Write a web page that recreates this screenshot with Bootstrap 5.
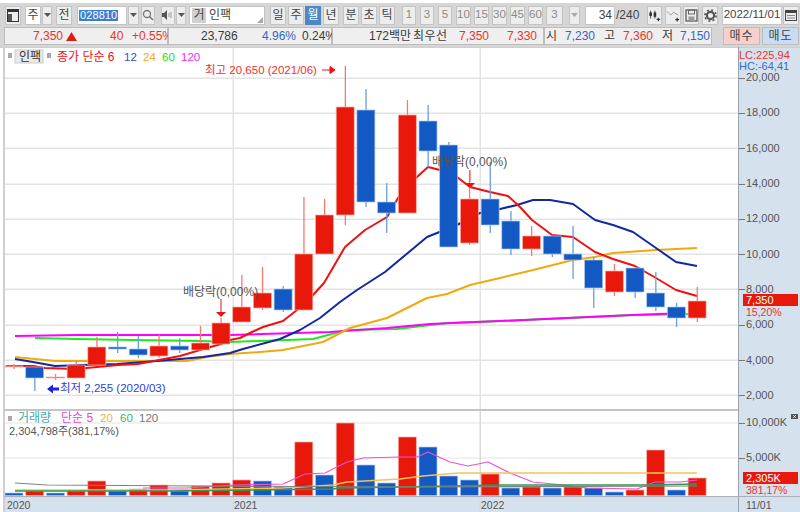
<!DOCTYPE html>
<html lang="ko">
<head>
<meta charset="utf-8">
<title>차트</title>
<link rel="stylesheet" href="https://cdn.jsdelivr.net/npm/bootstrap@5.3.0/dist/css/bootstrap.min.css">
<style>
html,body{margin:0;width:800px;height:512px;overflow:hidden;background:#fff;}
body{font-family:"Liberation Sans","Noto Sans CJK KR",sans-serif;font-size:12px;color:#333;}
.shell{width:800px;height:512px;padding-top:3px;}
.bar-top{height:24px;background:#d6d6d6;padding:2px 0 2px 5px;}
.bar-info{height:20px;background:#d6d6d6;padding:0 0 2px 4px;}
.tb{height:19px;background:#ededed;border:1px solid #c4c4c4;display:flex;align-items:center;justify-content:center;color:#444;font-size:12px;line-height:1;padding:0;flex:none;}
.tb.wht{background:#fff;}
.tb.on{background:#4f86c6;color:#fff;border-color:#4f86c6;}
.tb.mute{color:#8a8a8a;font-size:11.5px;}
.w10{width:10px}.w11{width:11px}.w14{width:14px}.w15{width:15px}.w16{width:16px}.w17{width:17px}
.ml1{margin-left:1px}.ml2{margin-left:2px}.ml3{margin-left:3px}.ml4{margin-left:4px}.ml5{margin-left:5px}.ml6{margin-left:6px}.ml7{margin-left:7px}
.code{width:50px;justify-content:flex-start;padding-left:1px;}
.code span{background:#3a7fd0;color:#fff;font-size:11px;padding:0 1px;letter-spacing:.1px;}
.combo{width:76px;justify-content:flex-start;position:relative;padding-left:2px;gap:3px;}
.combo b{font-weight:400;background:#d0d0d0;width:14px;height:15px;display:flex;align-items:center;justify-content:center;}
.combo i{position:absolute;right:1px;bottom:1px;border-left:6px solid transparent;border-bottom:6px solid #aaa;}
.num{width:30px;justify-content:flex-end;padding-right:2px;}
.ratio{width:26px;font-size:12px;color:#444;}
.dateb{width:60px;font-size:11.5px;}
.cell{position:relative;height:18px;background:#efefef;border:1px solid #bdbdbd;font-size:12px;line-height:16px;white-space:nowrap;flex:none;}
.c1{width:164px}.c2{width:164px}.c3{width:212px}.c4{width:168px}
.rd{color:#e8352c}.bl{color:#3566c4}.dk{color:#3a3a3a}
.buy,.sell{height:18px;width:37px;border:1px solid #bdbdbd;display:flex;align-items:center;justify-content:center;font-size:12px;letter-spacing:1px;color:#444;flex:none;}
.buy{background:#f6d0cb;margin-left:11px}.sell{background:#c8ddf3;margin-left:2px;}
.tx{position:absolute;}
.plot{display:block;width:800px;height:465px;}
.plot text{font-family:"Liberation Sans","Noto Sans CJK KR",sans-serif;font-size:12px;}
.plot .sm{font-size:11px;}
.plot .md{font-size:11.5px;}
.plot .xs{font-size:10.5px;}
.plot .ax text{fill:#555;font-size:11px;}
.plot .ax .xs{font-size:10.5px;}
.a1{left:28px}.a2{left:105px}.a3{left:127px}
.b1{left:32px}.b2{left:93px}.b3{left:133px}
.d1{left:36px}.d2{left:80px;letter-spacing:.5px}.d3{left:126px}.d4{left:174px}
.e1{left:1px}.e2{left:20px}.e3{left:59px}.e4{left:78px}.e5{left:117px}.e6{left:135px}
</style>
</head>
<body>
<div class="shell">
  <div class="d-flex align-items-center bar-top">
    <div class="tb w16"><svg width="12" height="13" viewBox="0 0 12 13"><rect x=".5" y=".5" width="11" height="12" fill="none" stroke="#333"/><rect x="1" y="1" width="10" height="2" fill="#333"/><rect x="1" y="5" width="4" height="7" fill="#555"/></svg></div>
    <div class="tb wht w16 ml4">주</div>
    <div class="tb w10 ml1"><svg width="7" height="4"><path d="M0 0h7L3.500 4z" fill="#555"/></svg></div>
    <div class="tb w16 ml4">전</div>
    <div class="tb wht code ml5"><span>028810</span></div>
    <div class="tb w11 ml1"><svg width="7" height="4"><path d="M0 0h7L3.500 4z" fill="#555"/></svg></div>
    <div class="tb w14 ml2"><svg width="12" height="12" viewBox="0 0 12 12"><circle cx="5" cy="5" r="3.500" fill="none" stroke="#777" stroke-width="1.300"/><path d="M7.500 7.500L11 11" stroke="#777" stroke-width="1.600"/></svg></div>
    <div class="tb w14 ml6"><svg width="12" height="12" viewBox="0 0 12 12"><path d="M0 4h2l3-3v10L2 8H0z" fill="#555"/><path d="M7 4v4M9 3v6" stroke="#999"/></svg></div>
    <div class="tb w10 ml1"><svg width="7" height="4"><path d="M0 0h7L3.500 4z" fill="#555"/></svg></div>
    <div class="tb wht combo ml3"><b>거</b><span>인팩</span><i></i></div>
    <div class="tb w16 ml5">일</div>
    <div class="tb w16 ml2">주</div>
    <div class="tb w16 on ml1">월</div>
    <div class="tb w16 ml2">년</div>
    <div class="tb w16 ml4">분</div>
    <div class="tb w16 ml2">초</div>
    <div class="tb w16 ml2">틱</div>
    <div class="tb mute w14 ml7">1</div>
    <div class="tb mute w14 ml4">3</div>
    <div class="tb mute w14 ml4">5</div>
    <div class="tb mute w15 ml4">10</div>
    <div class="tb mute w15 ml3">15</div>
    <div class="tb mute w15 ml3">30</div>
    <div class="tb mute w15 ml3">45</div>
    <div class="tb mute w15 ml3">60</div>
    <div class="tb mute w17 ml3">3</div>
    <div class="tb w11 ml6"><svg width="7" height="4"><path d="M0 0h7L3.500 4z" fill="#aaa"/></svg></div>
    <div class="tb wht num ml5">34</div>
    <div class="ratio ml1">/240</div>
    <div class="tb w15 ml5"><svg width="15" height="15" viewBox="0 0 15 15"><path d="M3 2v9M8 2v9" stroke="#333"/><rect x="1.500" y="4" width="3" height="4" fill="#333"/><rect x="6.500" y="4" width="3" height="5" fill="#333"/><path d="M12 10v4M10 12h4" stroke="#333" stroke-width="1.300"/></svg></div>
    <div class="tb w16 ml3"><svg width="15" height="15" viewBox="0 0 15 15"><path d="M1 3l4 4 3-3 5 3" fill="none" stroke="#999"/><path d="M12 10v4M10 12h4" stroke="#333" stroke-width="1.300"/></svg></div>
    <div class="tb w16 ml2"><svg width="13" height="13" viewBox="0 0 13 13"><rect x="1" y="1" width="11" height="11" fill="none" stroke="#666" stroke-width="1.400"/><rect x="3.500" y="1" width="6" height="4" fill="none" stroke="#666"/><rect x="3.500" y="7.500" width="6" height="4" fill="#999"/></svg></div>
    <div class="tb w16 ml3"><svg width="13" height="13" viewBox="0 0 13 13"><circle cx="6.500" cy="6.500" r="3.600" fill="none" stroke="#555" stroke-width="2.200"/><circle cx="6.500" cy="6.500" r="5.600" fill="none" stroke="#555" stroke-width="1.600" stroke-dasharray="2 2.400"/></svg></div>
    <div class="tb wht dateb ml4">2022/11/01</div>
    <div class="tb w16 ml1"><svg width="12" height="11" viewBox="0 0 12 11"><rect x=".5" y=".5" width="11" height="10" fill="none" stroke="#444"/><rect x="1" y="1" width="10" height="2" fill="#444"/><path d="M2 5.500h8M2 8h8" stroke="#888"/></svg></div>
  </div>
  <div class="d-flex bar-info">
    <div class="cell c1"><span class="tx a1 rd">7,350 <svg width="11" height="9" viewBox="0 0 11 9"><path d="M0 9L5.500 0 11 9z" fill="#e01e10"/></svg></span><span class="tx a2 rd">40</span><span class="tx a3 rd">+0.55%</span></div>
    <div class="cell c2"><span class="tx b1 dk">23,786</span><span class="tx b2 bl">4.96%</span><span class="tx b3 dk">0.24%</span></div>
    <div class="cell c3"><span class="tx d1 dk">172백만</span><span class="tx d2 dk">최우선</span><span class="tx d3 rd">7,350</span><span class="tx d4 rd">7,330</span></div>
    <div class="cell c4"><span class="tx e1 dk">시</span><span class="tx e2 bl">7,230</span><span class="tx e3 dk">고</span><span class="tx e4 rd">7,360</span><span class="tx e5 dk">저</span><span class="tx e6 bl">7,150</span></div>
    <div class="buy">매수</div>
    <div class="sell">매도</div>
  </div>
  <svg class="plot" viewBox="0 47 800 465" xmlns="http://www.w3.org/2000/svg">
    <rect x="0" y="47" width="800" height="465" fill="#fff"/>
    <rect x="738" y="47" width="62" height="465" fill="#d6e1ee"/>
    <rect x="4" y="497" width="734" height="15" fill="#d6e1ee"/>
    <rect x="3" y="47" width="2" height="465" fill="#cfcfcf"/>
    <rect x="0" y="47" width="800" height="1" fill="#cfcfcf"/>
    <g id="grid"></g>
    <g id="lines" fill="none" stroke-linejoin="round"></g>
    <g id="candles"></g>
    <g id="vols"></g>
    <g id="vlines" fill="none" stroke-linejoin="round"></g>
    <rect x="4" y="409" width="734" height="2" fill="#c4c4c4"/>
    <rect x="738" y="47" width="1" height="465" fill="#9aa3ad"/>
    <rect x="4" y="496" width="796" height="1" fill="#a9b0b8"/>
    <g id="ticks" stroke="#777"></g>
    <rect x="8" y="53" width="4" height="5" fill="#aaa"/>
    <rect x="15" y="50" width="28" height="13" fill="#e9e9e9" stroke="#ccc"/>
    <text x="19" y="61" fill="#333">인팩</text>
    <rect x="47" y="53" width="4" height="5" fill="#aaa"/>
    <text x="57" y="61" fill="#f01010">종가 단순 6</text>
    <text class="md" x="124" y="61" fill="#2f4fd0">12</text>
    <text class="md" x="143" y="61" fill="#f5a623">24</text>
    <text class="md" x="162" y="61" fill="#22dd22">60</text>
    <text class="md" x="181" y="61" fill="#f030f0">120</text>
    <text class="md" x="205" y="74" fill="#f03030">최고 20,650 (2021/06)</text>
    <path d="M322 70h9M330 66.500l5 3.500-5 3.500z" stroke="#f01010" fill="#f01010"/>
    <text x="183" y="296" fill="#555">배당락(0,00%)</text>
    <text x="432" y="166" fill="#555">배당락(0,00%)</text>
    <path d="M221 299v13" stroke="#f01010"/><path d="M216 312h10l-5 5z" fill="#f01010"/>
    <path d="M470 170v12" stroke="#f55"/><path d="M465 183h10l-5 5z" fill="#f01010"/>
    <path d="M47 389l6-4.500v3h6v3h-6v3z" fill="#2020e0"/>
    <text class="md" x="60" y="392" fill="#2b3fd8">최저 2,255 (2020/03)</text>
    <rect x="8" y="416" width="4" height="5" fill="#aaa"/>
    <text x="18" y="422" fill="#3fa9a9">거래량</text>
    <text x="61" y="422" fill="#f040e0">단순 5</text>
    <text class="md" x="100" y="422" fill="#f5b042">20</text>
    <text class="md" x="120" y="422" fill="#35b56a">60</text>
    <text class="md" x="139" y="422" fill="#777">120</text>
    <text class="sm" x="9" y="435" fill="#555">2,304,798주(381,17%)</text>
    <text class="sm" x="739" y="59" fill="#e8352c">LC:225,94</text>
    <text class="sm" x="739" y="70" fill="#2f6fd0">HC:-64,41</text>
    <g class="ax">
      <text x="746" y="81">20,000</text><text x="746" y="116">18,000</text><text x="746" y="152">16,000</text><text x="746" y="187">14,000</text><text x="746" y="222">12,000</text><text x="746" y="258">10,000</text><text x="746" y="293">8,000</text><text x="746" y="328">6,000</text><text x="746" y="364">4,000</text><text x="746" y="399">2,000</text>
      <text x="746" y="426">10,000K</text><text x="746" y="461">5,000K</text>
      <text class="xs" x="7" y="509">2020</text><text class="xs" x="234" y="509">2021</text><text class="xs" x="481" y="509">2022</text><text class="xs" x="746" y="509">11/01</text>
    </g>
    <rect x="743" y="294" width="55" height="12" fill="#e8190a"/>
    <text class="sm" x="746" y="304" fill="#fff">7,350</text>
    <text class="xs" x="746" y="316" fill="#e8352c">15,20%</text>
    <rect x="743" y="472" width="55" height="12" fill="#e8190a"/>
    <text class="sm" x="746" y="482" fill="#fff">2,305K</text>
    <text class="xs" x="746" y="494" fill="#e8352c">381,17%</text>
    <rect x="791" y="414" width="7" height="5" fill="#555"/>
    <path d="M793 415l3 3M796 415l-3 3" stroke="#fff" stroke-width=".7"/>
  </svg>
</div>
<script>
(function(){
var NS="http://www.w3.org/2000/svg";
function el(p,n,a){var e=document.createElementNS(NS,n);for(var k in a)e.setAttribute(k,a[k]);document.getElementById(p).appendChild(e);return e;}
var RED="#e8190a",BLU="#1259c3",REDW="#f47a72",BLUW="#6b9be0",cx=function(i){return 14+20.7*i;};
[78,113,148,184,219,254,289,325,360,395].forEach(function(y){el("grid","rect",{x:5,y:y-.5,width:733,height:1.500,fill:"#e3e3e3"});});
[423,458].forEach(function(y){el("grid","rect",{x:5,y:y-.5,width:733,height:1,fill:"#e3e3e3"});});
[233,480].forEach(function(x){el("grid","rect",{x:x-.5,y:48,width:1.500,height:361,fill:"#e3e3e3"});el("grid","rect",{x:x-.5,y:411,width:1.500,height:101,fill:"#d9d9d9"});});
// color, wick top, body top, body bottom, wick bottom
var C=[["r",364,366,367,369],["b",367,367,378,391],["r",374,377,378,380],["r",361,365,378,378],["r",337,347,365,365],["b",332,347,349,353],["b",336,349,355,358],["r",335,346,356,358],["b",338,346,350,353],["r",326,343,350,350],["r",318,323,344,344],["r",275,307,322,322],["r",267,293,308,310],["b",286,289,310,312],["r",197,254,310,310],["r",199,215,254,254],["r",66,107,215,225],["b",89,110,202,207],["b",183,202,213,233],["r",100,115,213,213],["b",105,121,151,167],["b",142,145,247,247],["r",170,199,243,245],["b",162,199,225,233],["b",211,221,249,255],["r",226,236,249,256],["b",236,236,254,257],["b",226,254,260,279],["b",257,260,288,308],["r",264,271,292,296],["b",290,268,292,298],["b",272,293,307,311],["b",303,307,318,327],["r",287,301,318,322]];
C.forEach(function(c,i){var x=cx(i),r=c[0]=="r";
 el("candles","rect",{x:x-.5,y:c[1],width:1.300,height:c[4]-c[1],fill:r?REDW:BLUW});
 el("candles","rect",{x:x-9,y:c[2],width:18,height:Math.max(c[3]-c[2],1),fill:r?RED:BLU,stroke:r?"#f7b0aa":"#a9c6ef","stroke-width":.7});
});
var V=[["b",493],["r",491],["b",493],["r",491],["r",481],["b",491],["r",489],["r",485],["b",491],["r",486],["r",483],["r",480],["b",481],["b",487],["r",442],["b",475],["r",423],["b",465],["b",483],["r",437],["b",447],["b",476],["b",480],["r",474],["b",488],["r",487],["b",488],["r",487],["b",488],["b",492],["r",490],["r",450],["b",490],["r",478]];
V.forEach(function(v,i){var r=v[0]=="r";el("vols","rect",{x:cx(i)-9,y:v[1],width:18,height:495.500-v[1],fill:r?RED:BLU,stroke:r?"#f7b0aa":"#a9c6ef","stroke-width":.7});});
function L(g,col,w,pts){el(g,"polyline",{points:pts,stroke:col,"stroke-width":w});}
L("lines","#22e622",2,"35,338 77,339 133,340 200,341 230,342 313,339 347,330 397,329 447,323 500,321 633,315 690,314");
L("lines","#ff00ff",2,"15,336 77,335 230,335 330,332 387,328 430,324 500,321 567,318 633,315 686,313");
L("lines","#f2a90f",2,"15,357 55,361 100,361 157,361 187,361 207,357 230,354 260,352 283,350 323,342 350,328 387,318 427,298 447,294 470,285 500,278 533,270 573,260 595,257 613,253 656,250 697,248");
L("lines","#13279f",2,"15,359 33,362 55,366 83,365 117,364 157,361 203,357 230,353 243,349 280,339 300,330 320,318 340,302 357,290 385,272 427,237 457,225 480,213 500,209 517,205 533,200 550,200 573,204 595,220 613,225 633,232 656,248 676,262 697,266");
L("lines","#f01010",2,"6,366 33,366 45,368 76,369 97,367 118,365 138,364 159,360 180,356 200,350 221,344 230,340 240,338 252,332 263,327 283,321 297,310 313,295 324,283 345,247 365,230 387,217 398,198 417,177 428,167 440,170 457,177 470,187 490,192 508,196 520,207 532,220 552,235 573,237 595,252 613,259 635,266 656,278 676,290 697,296");
L("vlines","#f04fd8",1.200,"143,488 187,488 233,485 283,484 305,474 325,473 347,462 363,458 400,457 417,457 428,452 450,462 468,466 488,462 510,473 533,482 563,485 587,488 637,489 655,482 680,482 697,480");
L("vlines","#f5c25a",1.500,"15,490 167,490 283,488 333,485 347,482 400,479 423,476 458,473 645,473 697,473");
L("vlines","#2e9b4f",1.500,"15,491 167,491 333,489 340,488 400,487 500,485 645,485 697,484");
L("vlines","#808080",1.200,"15,483 47,485 200,486 400,487 697,486");
[78,113,148,184,219,254,289,325,360,395].forEach(function(y){el("ticks","path",{d:"M739 "+y+".5h6"});});
[423,458].forEach(function(y){el("ticks","path",{d:"M739 "+y+".5h6"});});
})();
</script>
<script src="https://cdn.jsdelivr.net/npm/bootstrap@5.3.0/dist/js/bootstrap.bundle.min.js"></script>
</body>
</html>
